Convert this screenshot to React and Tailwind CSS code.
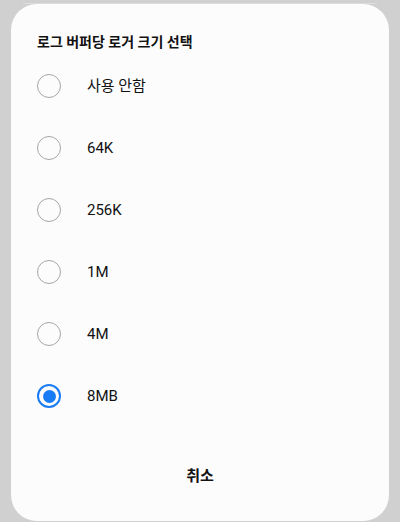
import React, { useState } from 'react';

const OPTIONS = ['사용 안함', '64K', '256K', '1M', '4M', '8MB'];

function Radio({ checked }) {
  return checked ? (
    <span className="flex h-[24px] w-[24px] items-center justify-center rounded-full border-2 border-[#1a7cf4]">
      <span className="h-[13px] w-[13px] rounded-full bg-[#1a7cf4]" />
    </span>
  ) : (
    <span className="h-[24px] w-[24px] rounded-full border-[1.5px] border-[#a6a6a6]" />
  );
}

export default function App() {
  const [selected, setSelected] = useState('8MB');

  return (
    <div
      className="h-[522px] w-[400px] overflow-hidden bg-[#d0d0d0] px-[11px]"
      style={{ fontFamily: 'Roboto, "Noto Sans CJK KR", "Noto Sans", sans-serif' }}
    >
      {/* edge of the sheet behind */}
      <div className="mx-[12px] mt-[3px] h-px bg-[#dcdcdc]" />

      {/* Dialog */}
      <div className="flex h-[517px] flex-col rounded-[26px] bg-[#fcfcfc] px-[26px] pt-[28px]">
        <h2 className="text-[14px] leading-[20px] font-bold text-[#111]">로그 버퍼당 로거 크기 선택</h2>

        <div className="mt-[3px] flex flex-col">
          {OPTIONS.map((opt) => (
            <button
              key={opt}
              onClick={() => setSelected(opt)}
              className="flex h-[62px] items-center gap-[26px] text-left"
            >
              <Radio checked={selected === opt} />
              <span className="text-[15px] text-[#111]">{opt}</span>
            </button>
          ))}
        </div>

        <button className="mt-[39px] self-center text-[15px] leading-[20px] font-bold text-[#111]">취소</button>
      </div>
    </div>
  );
}
